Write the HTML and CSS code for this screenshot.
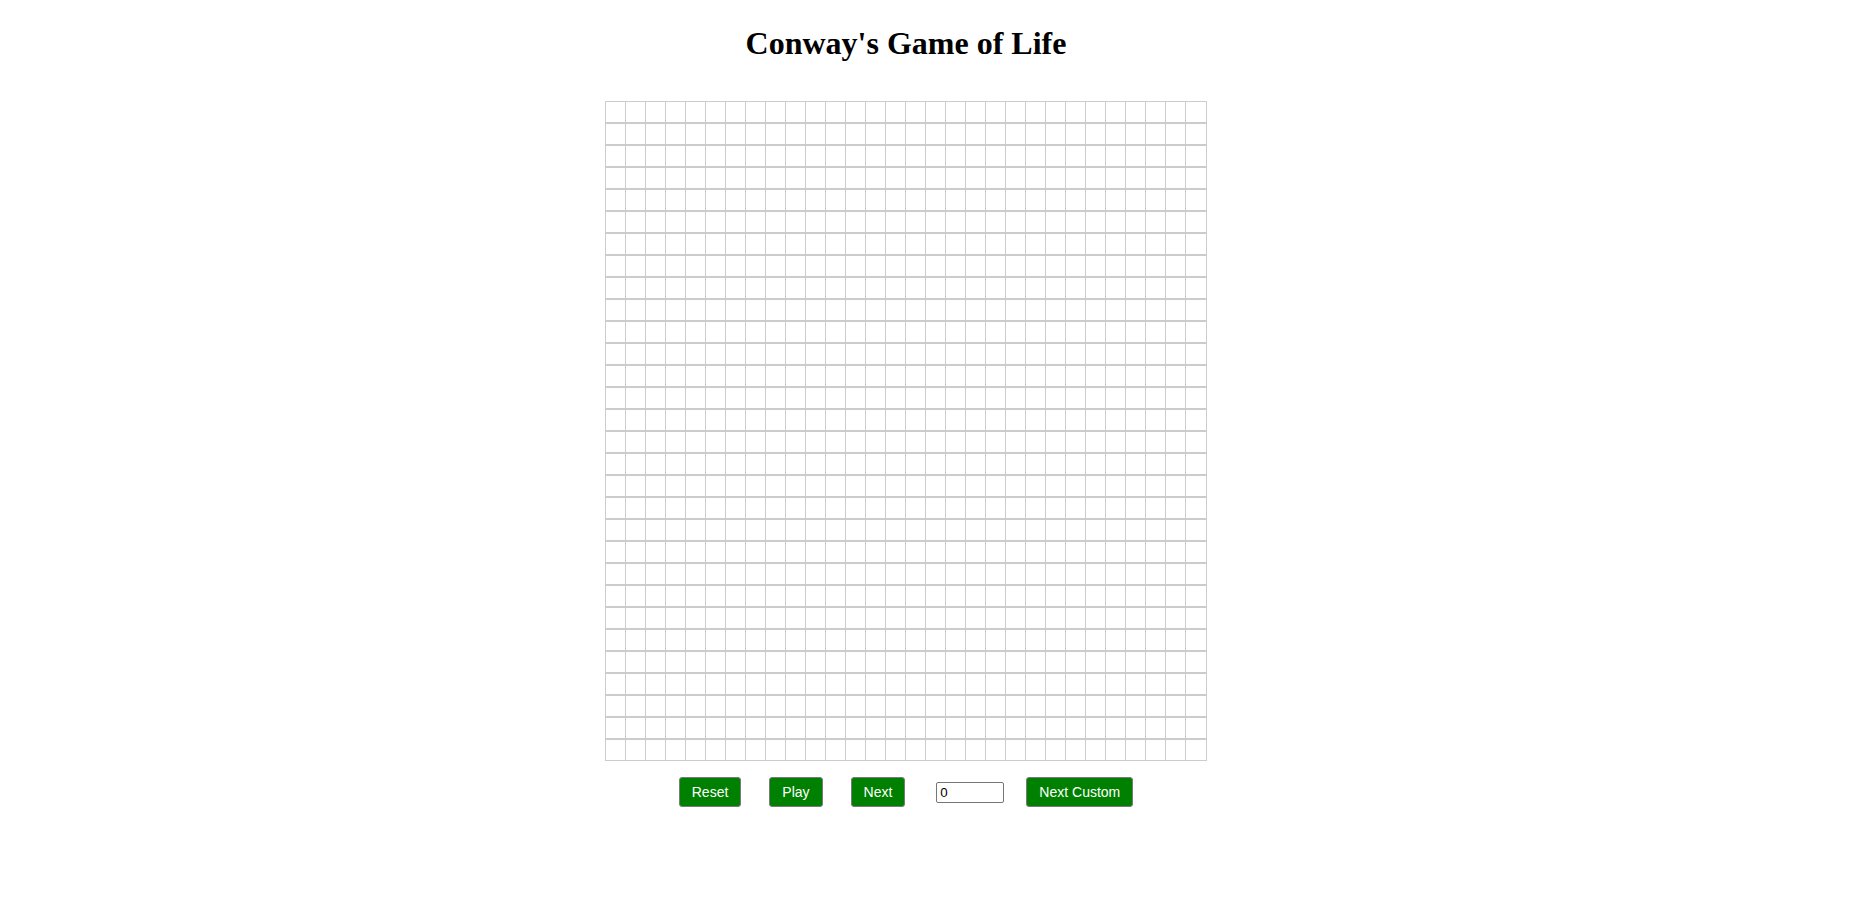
FILE: index.html
```html
<!DOCTYPE html>
<html>
<head>
<meta charset="utf-8">
<title>Conway's Game of Life</title>
<link rel="stylesheet" href="styles.css">
</head>
<body>
<div class="app">
  <h1 class="title">Conway's Game of Life</h1>
  <div class="board" id="board"></div>
  <div class="controls">
    <button class="btn">Reset</button>
    <button class="btn">Play</button>
    <button class="btn">Next</button>
    <input class="steps" type="text" value="0">
    <button class="btn">Next Custom</button>
  </div>
</div>
<script src="script.js"></script>
</body>
</html>
```
FILE: styles.css
```css
html, body {
  margin: 0;
  padding: 0;
  background: #fff;
}
.app {
  width: 1812px;
  display: flex;
  flex-direction: column;
  align-items: center;
}
.title {
  font-family: "Liberation Serif", "Times New Roman", serif;
  font-size: 32px;
  font-weight: bold;
  color: #000;
  margin: 25px 0 39px;
}
.board {
  display: grid;
  grid-template-columns: repeat(29, 19px) 20px;
  grid-template-rows: repeat(30, 20px);
  column-gap: 1px;
  row-gap: 2px;
  background: #cccccc;
  border: 1px solid #cccccc;
}
.cell {
  background: #fff;
}
.controls {
  display: flex;
  align-items: center;
  margin-top: 16px;
  gap: 28px;
}
.btn {
  font-family: "Liberation Sans", Arial, sans-serif;
  font-size: 14px;
  color: #fff;
  background: #008000;
  border: 1px solid #7a7a7a;
  border-radius: 3px;
  height: 30px;
  padding: 0 12px;
  cursor: pointer;
}
.steps {
  box-sizing: border-box;
  width: 68px;
  height: 21px;
  margin: 0 -6px 0 3px;
  padding: 1px 3px;
  border: 1px solid #767676;
  border-radius: 2px;
  font-family: "Liberation Sans", Arial, sans-serif;
  font-size: 13.33px;
  color: #000;
}
```
FILE: script.js
```js
var board = document.getElementById('board');
for (var i = 0; i < 900; i++) {
  var c = document.createElement('div');
  c.className = 'cell';
  board.appendChild(c);
}
```
